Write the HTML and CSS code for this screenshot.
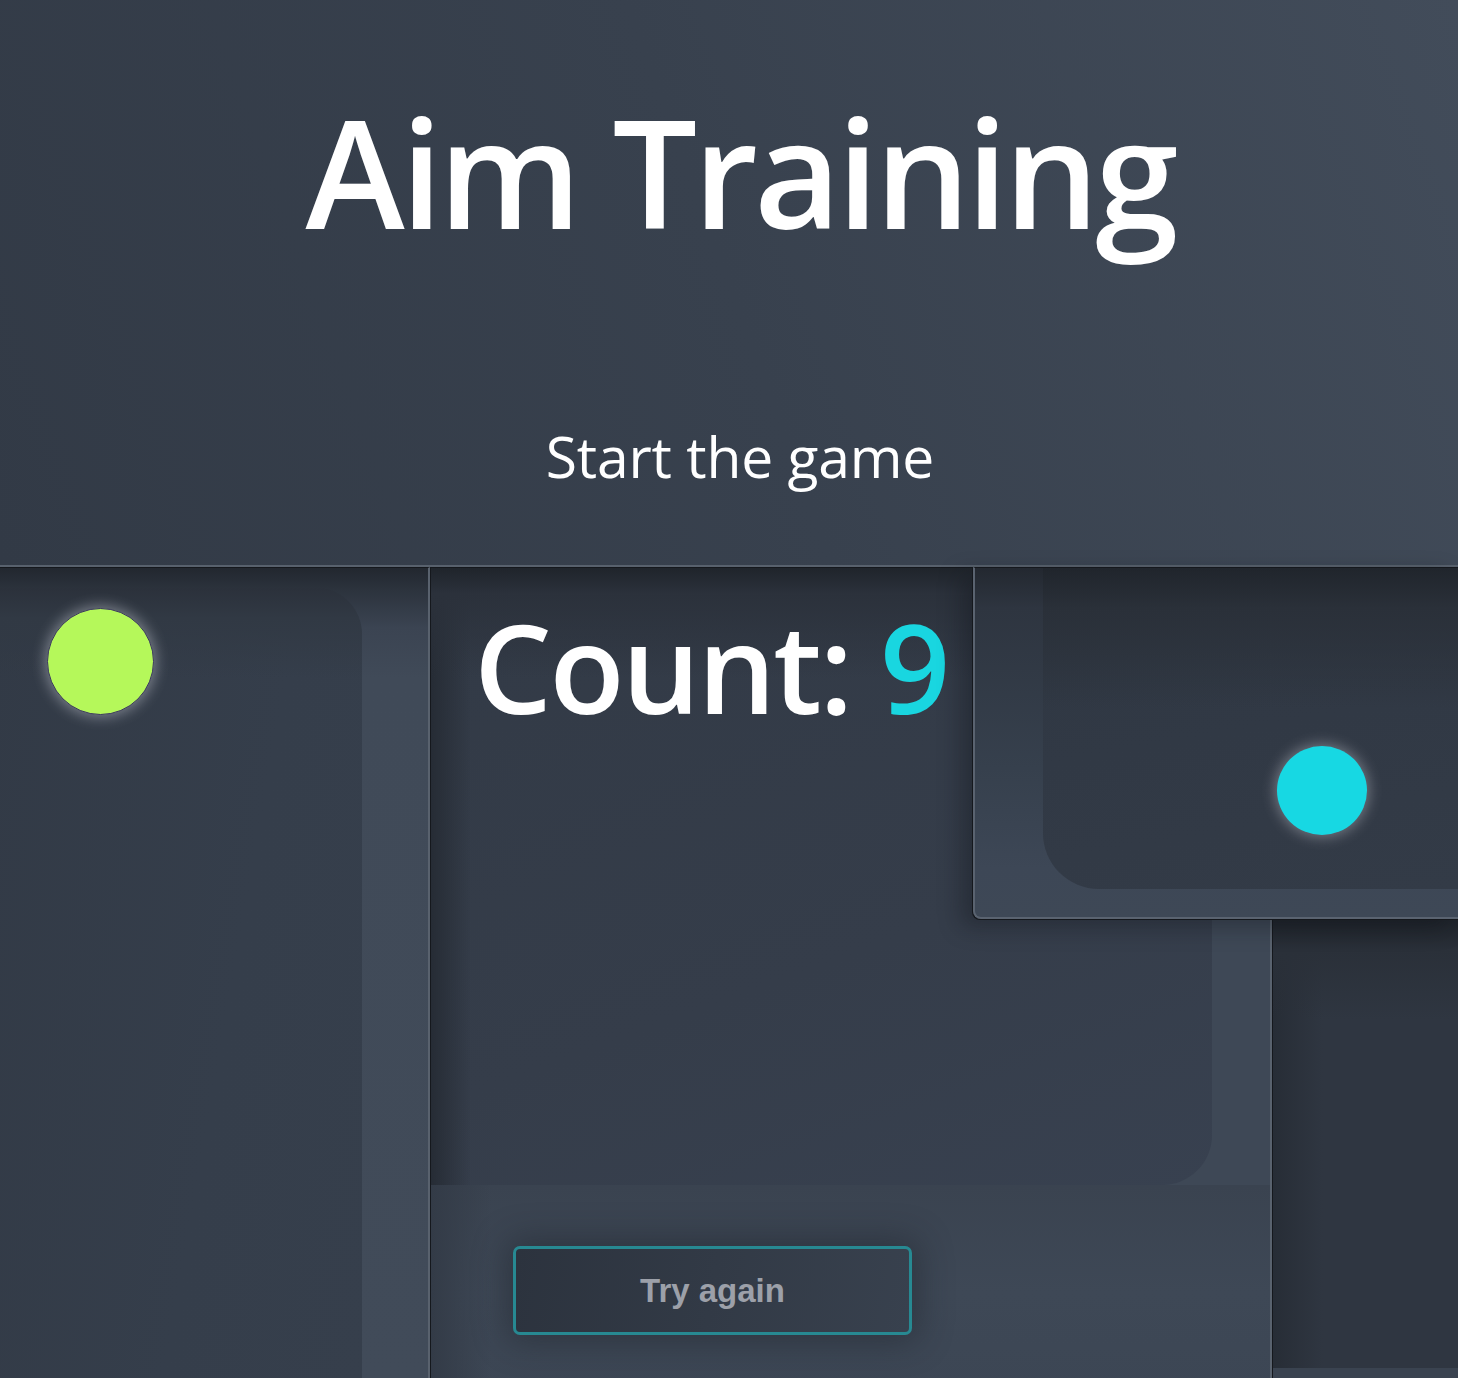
FILE: index.html
```html
<!DOCTYPE html>
<html lang="en">
<head>
<meta charset="utf-8">
<title>Aim Training</title>
<link rel="stylesheet" href="styles.css">
</head>
<body>
<header class="hero">
  <h1 class="title">Aim Training</h1>
  <p class="subtitle">Start the game</p>
</header>
<main class="board">
  <section class="panel panel-a">
    <div class="well well-a">
      <span class="target target-green"></span>
    </div>
  </section>
  <section class="panel panel-b">
    <div class="well well-b">
      <h2 class="count">Count: <span class="count-num">9</span></h2>
    </div>
    <div class="actions">
      <button class="retry" type="button">Try again</button>
    </div>
  </section>
  <section class="panel panel-c">
    <div class="well well-c">
      <span class="target target-cyan"></span>
    </div>
  </section>
  <section class="panel panel-d">
    <div class="well well-d"></div>
  </section>
</main>
</body>
</html>
```

FILE: styles.css
```css
* { box-sizing: border-box; }

html, body {
  margin: 0;
  padding: 0;
  height: 100%;
  overflow: hidden;
  background: #2f3641;
  font-family: "Open Sans", "Noto Sans", sans-serif;
}

.hero {
  height: 567px;
  border-bottom: 2px solid #58616d;
  background: linear-gradient(70deg, #323a46 0%, #38414e 50%, #424c5a 100%);
  color: #ffffff;
  display: flex;
  flex-direction: column;
  align-items: center;
  padding-left: 22px;
}

.title {
  margin: 96px 0 0;
  font-size: 150px;
  font-weight: 600;
  line-height: 1;
  letter-spacing: -4px;
}

.subtitle {
  margin: 182px 0 0;
  font-size: 57px;
  font-weight: 400;
  line-height: 1;
  letter-spacing: -0.2px;
}

.board {
  display: grid;
  grid-template-columns: 430px 543px 299px 186px;
  grid-template-rows: 352px 480px;
}

.panel {
  position: relative;
  border-top: 1px solid #15181d;
  display: flex;
  flex-direction: column;
}

.well {
  position: relative;
}

/* Panel A */
.panel-a {
  grid-column: 1;
  grid-row: 1 / 3;
  border-right: 2px solid #59626e;
  background: linear-gradient(180deg, #22272f 0px, #2c333d 22px, #3b4452 60px, #404a58 110px, #414b59 100%);
  padding-right: 66px;
  padding-top: 20px;
}
.well-a {
  flex: 1;
  border-top-right-radius: 46px;
  background:
    linear-gradient(180deg, #2b313b 0px, #313944 30px, rgba(52,61,74,0) 90px),
    linear-gradient(100deg, #323a46 0%, #353e4b 60%, #363f4c 100%);
}

/* Panel B */
.panel-b {
  grid-column: 2 / 4;
  grid-row: 1 / 3;
  border-left: 1px solid #15181d;
  border-right: 2px solid #59626e;
  background: linear-gradient(180deg, #3a4351 0%, #3e4856 40%, #3e4856 100%);
}
.well-b {
  height: 617px;
  margin-right: 58px;
  border-bottom-right-radius: 50px;
  background:
    linear-gradient(180deg, #1f242b 0px, #2b313b 25px, rgba(52,60,73,0) 110px),
    linear-gradient(90deg, #262c35 0px, rgba(52,60,73,0) 40px),
    linear-gradient(160deg, #323a46 0%, #353d4a 60%, #384150 100%);
  padding-left: 43px;
  padding-top: 37px;
}
.count {
  margin: 0;
  font-size: 123px;
  font-weight: 600;
  line-height: 1;
  letter-spacing: -2.5px;
  color: #ffffff;
}
.count-num {
  color: #19d6e0;
}

.actions {
  flex: 1;
  padding: 61px 0 0 82px;
  background:
    linear-gradient(90deg, #333b47 0px, rgba(62,72,86,0) 60px),
    linear-gradient(180deg, #3a4350 0%, #3e4856 50%, #3c4654 100%);
}
.retry {
  width: 399px;
  height: 89px;
  border: 3px solid #278992;
  border-radius: 7px;
  background: linear-gradient(100deg, #2c333e 0%, #323a46 50%, #38414e 100%);
  box-shadow: 0 0 34px 6px rgba(26, 30, 37, 0.45);
  color: #9ca0a9;
  font-family: "Liberation Sans", Arial, sans-serif;
  font-weight: 700;
  font-size: 33px;
  padding: 0;
  cursor: pointer;
}

/* Panel C */
.panel-c {
  grid-column: 3 / 5;
  grid-row: 1;
  z-index: 2;
  border-left: 2px solid #5a6370;
  border-bottom: 2px solid #5a6370;
  border-bottom-left-radius: 8px;
  box-shadow: -1px 1px 0 #15181d, -12px 8px 22px rgba(14, 17, 22, 0.35);
  background: linear-gradient(180deg, #232830 0px, #2e3540 40px, #36404d 200px, #3d4756 300px, #3e4856 100%);
  padding-left: 68px;
}
.well-c {
  height: 321px;
  border-bottom-left-radius: 56px;
  background:
    linear-gradient(180deg, #20252c 0px, #2a3039 40px, rgba(47,55,66,0) 140px),
    linear-gradient(170deg, #2f3742 0%, #313945 50%, #333b47 100%);
}

/* Panel D */
.panel-d {
  grid-column: 4;
  grid-row: 2;
  border-left: 1px solid #15181d;
  background: #3a4350;
}
.well-d {
  height: 448px;
  background:
    linear-gradient(180deg, #1f242b 0px, #2a3039 30px, rgba(46,53,64,0) 100px),
    linear-gradient(90deg, #272d36 0px, rgba(46,53,64,0) 50px),
    #2f3641;
}

/* Targets */
.target {
  position: absolute;
  border-radius: 50%;
}
.target-green {
  left: 47px;
  top: 20px;
  width: 107px;
  height: 107px;
  background: #b5f85a;
  border: 1px solid #3b3760;
  box-shadow: 0 0 14px 2px rgba(214, 218, 226, 0.45);
}
.target-cyan {
  left: 234px;
  top: 178px;
  width: 90px;
  height: 89px;
  background: #17d8e3;
  box-shadow: 0 0 14px 2px rgba(214, 218, 226, 0.4);
}
```
